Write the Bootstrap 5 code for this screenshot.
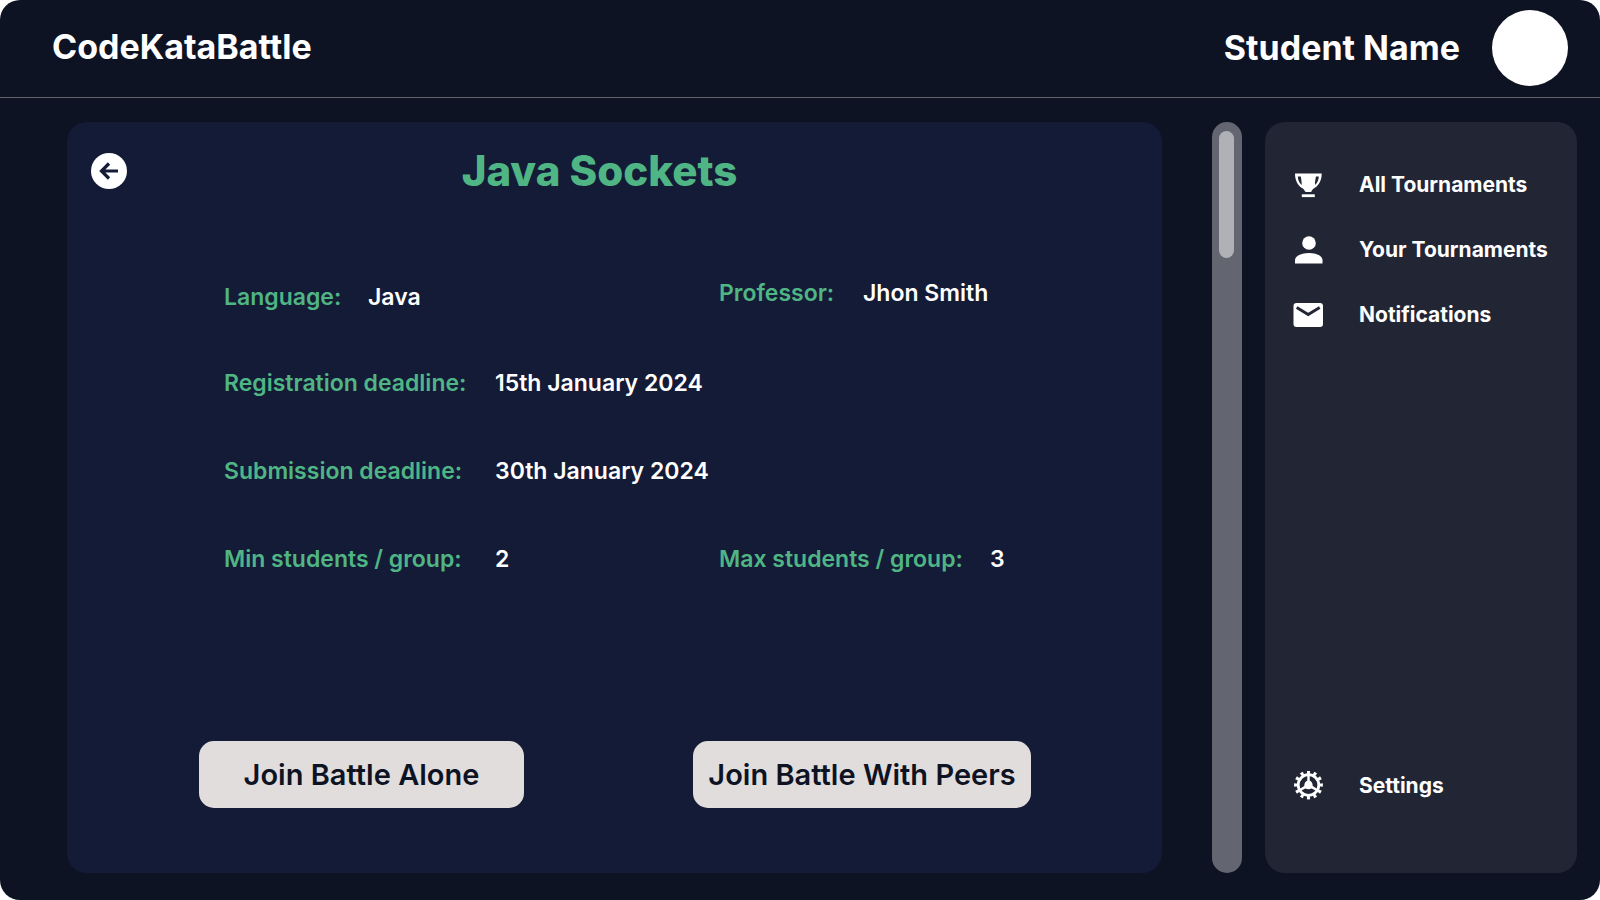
<!DOCTYPE html>
<html lang="en">
<head>
<meta charset="utf-8">
<meta name="viewport" content="width=device-width, initial-scale=1">
<title>CodeKataBattle</title>
<link rel="stylesheet" href="https://cdn.jsdelivr.net/npm/bootstrap@5.3.0/dist/css/bootstrap.min.css">
<style>
  body { background: #fff; font-family: Inter, "Open Sans", sans-serif; }
  .app-frame { background: #0e1324; border-radius: 20px; }
  .top-bar { height: 98px; border-bottom: 1px solid #5f616b; padding: 0 32px 2px 52px; }
  .brand-name { font-size: 34px; line-height: 40px; font-weight: 700; padding-bottom: 2px; }
  .user-name { font-size: 34px; line-height: 40px; font-weight: 700; }
  .avatar { width: 76px; height: 76px; }
  .workspace { padding: 24px 23px 27px 67px; }
  .battle-panel { background: #141b37; border-radius: 20px; }
  .battle-head { padding: 26px 24px 0; }
  .back-btn { width: 36px; height: 36px; }
  .battle-title { font-size: 42px; line-height: 46px; font-weight: 800; color: #50b584; padding-right: 66px; }
  .battle-info { padding: 85px 40px 0 157px; font-size: 23px; line-height: 28px; font-weight: 600; }
  .info-row { display: grid; grid-template-columns: 495fr 403fr; margin-bottom: 60px; }
  .info-row.first-row { margin-bottom: 58px; }
  .info-row dt { color: #50b584; font-weight: 600; min-width: 271px; }
  .info-row dt.short-label { min-width: 144px; }
  .battle-actions { display: grid; grid-template-columns: 494fr 469fr; padding: 0 0 65px 132px; }
  .join-btn { background: #e1dddc; color: #0e1324; border-radius: 15px; height: 67px; font-size: 29px; line-height: 36px; font-weight: 600; padding: 0 12px; width: 338px; }
  .join-alone { width: 325px; }
  .join-btn:hover { background: #fff; color: #0e1324; }
  .scroll-rail { width: 30px; margin-left: 50px; margin-right: 23px; padding: 9px 7px; background: #636570; }
  .scroll-grip { width: 15px; height: 127px; background: #b0b1b6; }
  .side-menu { width: 312px; background: #222534; border-radius: 20px; padding: 35px 16px 60px 28px; }
  .side-group { gap: 10px; }
  .side-link { font-size: 21px; line-height: 25px; font-weight: 700; height: 55px; gap: 36px; white-space: nowrap; }
</style>
</head>
<body>
<div class="app-frame d-flex flex-column min-vh-100 text-white">
  <header class="top-bar d-flex align-items-center justify-content-between">
    <a href="#" class="brand-name text-white text-decoration-none">CodeKataBattle</a>
    <div class="d-flex align-items-center gap-4">
      <span class="user-name me-2">Student Name</span>
      <span class="avatar rounded-circle bg-white"></span>
    </div>
  </header>

  <div class="workspace d-flex flex-grow-1">
    <main class="battle-panel d-flex flex-column flex-grow-1">
      <div class="battle-head d-flex align-items-center">
        <button type="button" class="back-btn btn p-0 border-0 d-flex" aria-label="Back">
          <svg width="36" height="36" viewBox="0 0 36 36"><circle cx="18" cy="18" r="18" fill="#fff"/><path d="M27 18H11M18 10.500L10.500 18L18 25.500" fill="none" stroke="#141b37" stroke-width="3.200"/></svg>
        </button>
        <h1 class="battle-title flex-grow-1 text-center mb-0">Java Sockets</h1>
      </div>

      <div class="battle-info">
        <dl class="info-row first-row">
          <div class="d-flex pt-1"><dt class="short-label">Language:</dt><dd class="mb-0">Java</dd></div>
          <div class="d-flex"><dt class="short-label">Professor:</dt><dd class="mb-0">Jhon Smith</dd></div>
        </dl>
        <dl class="info-row">
          <div class="d-flex"><dt>Registration deadline:</dt><dd class="mb-0 text-nowrap">15th January 2024</dd></div>
        </dl>
        <dl class="info-row">
          <div class="d-flex"><dt>Submission deadline:</dt><dd class="mb-0 text-nowrap">30th January 2024</dd></div>
        </dl>
        <dl class="info-row">
          <div class="d-flex"><dt>Min students / group:</dt><dd class="mb-0">2</dd></div>
          <div class="d-flex"><dt>Max students / group:</dt><dd class="mb-0">3</dd></div>
        </dl>
      </div>

      <div class="battle-actions mt-auto">
        <div><button type="button" class="join-btn join-alone btn border-0">Join Battle Alone</button></div>
        <div><button type="button" class="join-btn btn border-0 text-nowrap">Join Battle With Peers</button></div>
      </div>
    </main>

    <div class="scroll-rail rounded-pill flex-shrink-0"><div class="scroll-grip rounded-pill"></div></div>

    <nav class="side-menu d-flex flex-column flex-shrink-0" aria-label="Main">
      <div class="side-group d-flex flex-column">
        <a href="#" class="side-link d-flex align-items-center text-white text-decoration-none">
          <svg width="30" height="30" viewBox="0 0 30 30" fill="#fff"><path fill-rule="evenodd" d="M2 3.500H28.700C28.700 10 26 15.500 21.500 18C20.500 18.500 19.500 19.500 19 20.500C18.500 21.500 18 22 17 22H13.700C12.700 22 12 21.500 11.500 20.500C11 19.500 10.200 18.500 9 18C4.500 15.500 2 10 2 3.500ZM4.800 6.500C5 10 6.300 13 8.600 15C8.900 12 8.200 9.500 7.800 6.500ZM25.800 6.500H22.900C22.500 9.500 21.800 12 22 15C24.400 13 25.600 10 25.800 6.500Z"/><path d="M8.800 24.300H21.800V27.100H8.800Z"/></svg>
          All Tournaments
        </a>
        <a href="#" class="side-link d-flex align-items-center text-white text-decoration-none">
          <svg width="30" height="30" viewBox="0 0 30 30" fill="#fff"><circle cx="16" cy="8" r="6.800"/><path d="M2 28.500V25.500C2 20.500 9 18 16 18S29.500 20.500 29.500 25.500V28.500Z"/></svg>
          Your Tournaments
        </a>
        <a href="#" class="side-link d-flex align-items-center text-white text-decoration-none">
          <svg width="30" height="30" viewBox="0 0 30 30"><rect x=".5" y="3" width="29.500" height="24" rx="3" fill="#fff"/><path d="M3.700 7.500L15.200 14.500L26.700 7.500" fill="none" stroke="#222534" stroke-width="2.800"/></svg>
          Notifications
        </a>
      </div>
      <a href="#" class="side-link d-flex align-items-center text-white text-decoration-none mt-auto">
        <svg width="30" height="30" viewBox="-15.500 -14 30 30">
          <circle r="10.300" fill="none" stroke="#fff" stroke-width="2.800"/>
          <circle r="12.600" fill="none" stroke="#fff" stroke-width="3.600" pathLength="120" stroke-dasharray="4.600 5.400" stroke-dashoffset="2.300"/>
          <path d="M-1.200-10H1.200V-4.500C3.300-3.500 4.300-1.500 4.200 1L9.500 4.300L8.300 6.300L3.200 3.400C1 4.400-1 4.400-3.200 3.400L-8.300 6.300L-9.500 4.300L-4.200 1C-4.300-1.500-3.300-3.500-1.200-4.500Z" fill="#fff"/>
        </svg>
        Settings
      </a>
    </nav>
  </div>
</div>
<script src="https://cdn.jsdelivr.net/npm/bootstrap@5.3.0/dist/js/bootstrap.bundle.min.js"></script>
</body>
</html>
